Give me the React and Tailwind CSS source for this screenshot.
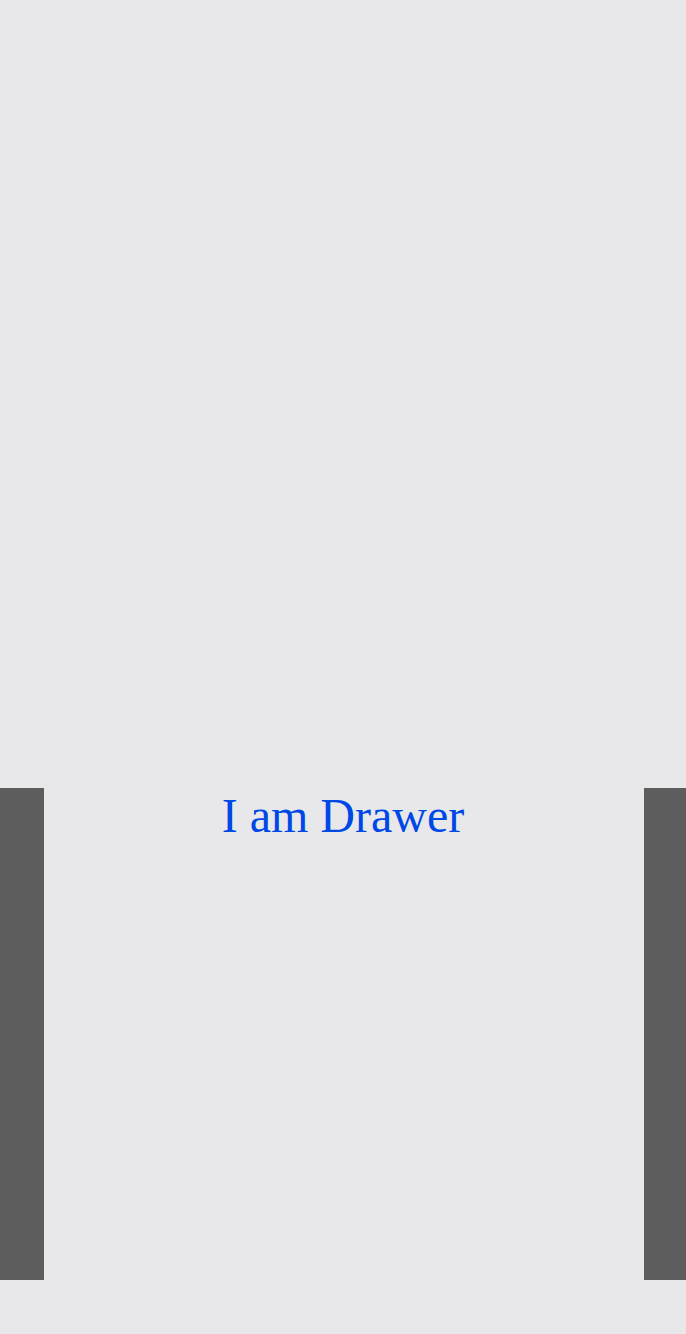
export default function App() {
  return (
    <main className="flex min-h-screen flex-col justify-end bg-[#e8e8ea] pb-[54px]">
      <section className="flex min-h-[492px] bg-[#5d5d5d] pr-[42px] pl-11">
        <div className="flex-1 bg-[#e8e8ea] pr-0.5 text-center font-['Liberation_Serif',serif] text-5xl leading-[56px] text-[#0048e5]">
          I am Drawer
        </div>
      </section>
    </main>
  );
}
